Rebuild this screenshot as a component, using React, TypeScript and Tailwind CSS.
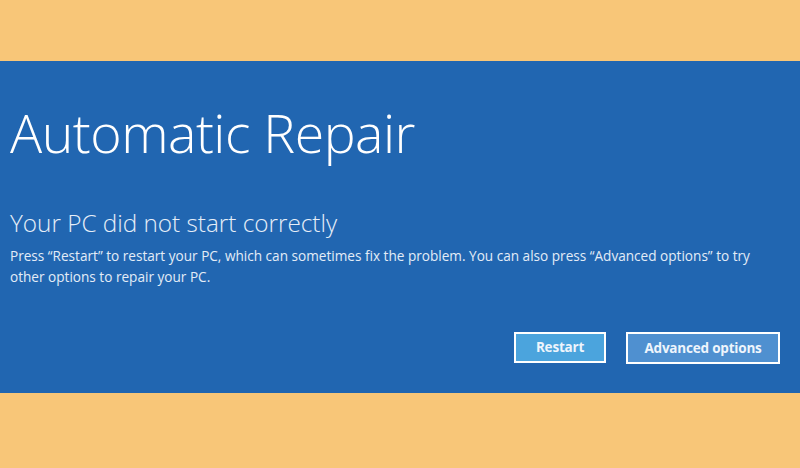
export default function App() {
  return (
    <div className="flex h-[468px] w-[800px] flex-col bg-[#f8c678]" style={{ fontFamily: '"Open Sans", "Noto Sans", sans-serif' }}>
      <div className="h-[61px] shrink-0" />
      <div className="flex h-[332px] shrink-0 flex-col bg-[#2166b1] px-[10px] text-white">
        <h1 className="mt-[36px] text-[53.6px] font-light leading-[72px] tracking-[-0.5px]">Automatic Repair</h1>
        <h2 className="mt-[38px] text-[24.3px] font-light leading-[32px] text-[#e6eef8]">Your PC did not start correctly</h2>
        <p className="mt-[6px] w-[770px] text-[13.6px] leading-[21px] text-[#e3ecf7]">
          Press “Restart” to restart your PC, which can sometimes fix the problem. You can also press “Advanced options” to try
          other options to repair your PC.
        </p>
        <div className="mt-[45px] flex justify-end gap-[20px] pr-[10px]">
          <button className="h-[31px] w-[92px] border-2 border-white bg-[#4ba4dd] text-[13.5px] font-bold tracking-[-0.2px] text-[#eef5fc]">
            Restart
          </button>
          <button className="h-[32px] w-[154px] border-2 border-white bg-[#4f90d0] text-[13.5px] font-bold tracking-[-0.2px] text-[#eef5fc]">
            Advanced options
          </button>
        </div>
      </div>
      <div className="flex-1" />
    </div>
  );
}
